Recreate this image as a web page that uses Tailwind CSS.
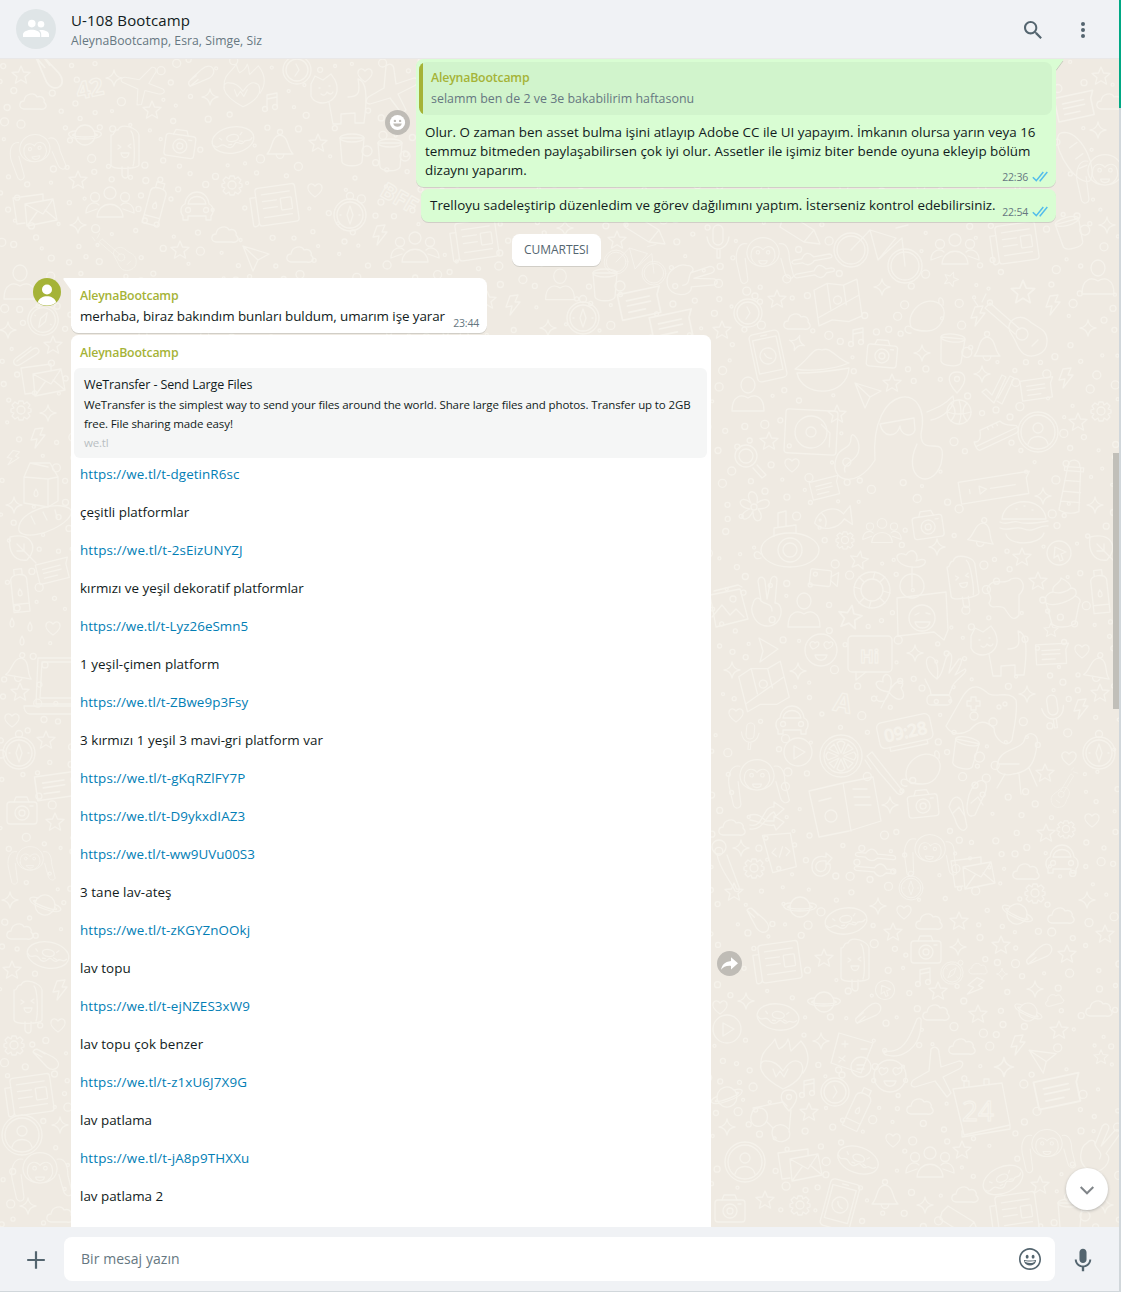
<!DOCTYPE html>
<html lang="tr">
<head>
<meta charset="utf-8">
<title>U-108 Bootcamp</title>
<script src="https://cdn.jsdelivr.net/npm/@tailwindcss/browser@4"></script>
</head>
<body class="h-[1292px] w-[1121px] overflow-hidden bg-[#d1d7db] font-['Open_Sans','Noto_Sans',sans-serif] text-[#111b21]">
<div class="flex h-[1292px] w-[1121px]">
<main class="flex h-[1291px] w-[1119px] flex-col bg-[#f0f2f5]">

  <header class="flex h-[59px] shrink-0 items-center border-b border-[#e9e8e8] pl-4 pr-6">
    <svg class="h-10 w-10" viewBox="0 0 40 40"><circle cx="20" cy="20" r="20" fill="#dfe5e7"/><g fill="#fff"><circle cx="15.8" cy="14.6" r="3.8"/><circle cx="25" cy="15.2" r="3.3"/><path d="M7 28v-2.600c0-3.100 5-4.700 8.800-4.700s8.300 1.600 8.300 4.700V28z"/><path d="M25.200 28v-2.700c0-1.800-.8-3.100-2.100-4.100 4.400-.7 9.900 1 9.900 4.300V28z"/></g></svg>
    <div class="ml-[15px] flex-1 pt-[2px]">
      <h1 class="text-[15px] leading-[21px] tracking-[0.15px]">U-108 Bootcamp</h1>
      <p class="text-[12.2px] leading-[20px] tracking-[0.05px] text-[#667781]">AleynaBootcamp, Esra, Simge, Siz</p>
    </div>
    <svg class="mr-[26px] mt-0.5 h-6 w-6" viewBox="0 0 24 24" fill="#54656f"><path d="M15.9,14.3H15L14.7,14c1-1.1,1.6-2.7,1.6-4.3c0-3.7-3-6.7-6.7-6.7S3,6,3,9.700s3,6.700,6.700,6.700c1.600,0,3.200-0.600,4.300-1.600l0.300,0.300v0.800l5.100,5.100l1.500-1.500L15.900,14.300z M9.700,14.300c-2.600,0-4.600-2.100-4.600-4.600s2.100-4.600,4.600-4.600s4.600,2.100,4.600,4.600S12.300,14.300,9.700,14.300z"/></svg>
    <svg class="mt-0.5 h-6 w-6" viewBox="0 0 24 24" fill="#54656f"><circle cx="12" cy="6" r="2"/><circle cx="12" cy="12" r="2"/><circle cx="12" cy="18" r="2"/></svg>
  </header>

  <section class="relative h-[1168px] shrink-0 overflow-hidden bg-[#efeae2]">
    <svg id="wallpaper" class="absolute inset-0 h-full w-full" viewBox="0 59 1119 1168" fill="none" stroke="#f5f2eb" stroke-width="1.3" stroke-linecap="round" stroke-linejoin="round"></svg>

    <div class="relative flex flex-col">
      <!-- outgoing reply -->
      <div class="flex h-[128px] items-start justify-end pr-[63px]">
        <svg class="mr-1.5 mt-[51px] h-[25px] w-[25px]" viewBox="0 0 25 25"><circle cx="12.500" cy="12.500" r="12.500" fill="#bfbcb6"/><circle cx="12.500" cy="12.500" r="7.600" fill="#fff"/><g fill="#bfbcb6"><circle cx="9.900" cy="10.900" r="1.200"/><circle cx="15.100" cy="10.900" r="1.200"/><path d="M8.200 13.600h8.600a4.500 4.500 0 0 1-8.600 0z"/></g></svg>
        <div class="relative h-[128px] w-[640px] rounded-b-[7.500px] rounded-tl-[7.500px] bg-[#d9fdd3] px-[3px] pt-[3px] shadow-[0_1px_0.500px_rgba(11,20,26,0.13)]">
          <svg class="absolute -right-2 top-0 h-[13px] w-2" viewBox="0 0 8 13"><path d="M0 0h8L0 11z" fill="#d9fdd3"/><path d="M7 2 0 11.500" stroke="#c5cfbd" stroke-width="1"/></svg>
          <div class="flex h-[53px] w-[633px] overflow-hidden rounded-[7.500px] bg-[#d1f4cc]">
            <div class="w-1 bg-[#a5b337]"></div>
            <div class="pl-2 pt-[5px]">
              <p class="text-[12.3px] font-semibold leading-[22px] tracking-[-0.17px] text-[#a5b337]">AleynaBootcamp</p>
              <p class="text-[12.400px] leading-5 tracking-[0.02px] text-[#667781]">selamm ben de 2 ve 3e bakabilirim haftasonu</p>
            </div>
          </div>
          <p class="whitespace-nowrap pl-[6px] pt-[8px] text-[13.400px] leading-[19px] tracking-[0.01px]">Olur. O zaman ben asset bulma işini atlayıp Adobe CC ile UI yapayım. İmkanın olursa yarın veya 16<br>temmuz bitmeden paylaşabilirsen çok iyi olur. Assetler ile işimiz biter bende oyuna ekleyip bölüm<br>dizaynı yaparım.</p>
          <div class="absolute bottom-[3px] right-[8px] flex items-center gap-1 text-[10.500px] leading-[15px] tracking-[-0.2px] text-[#667781]"><span class="pt-0.5 leading-[13px]">22:36</span> <svg class="h-[11px] w-4" viewBox="0 0 16 11" fill="none" stroke="#53bdeb" stroke-width="1.500"><path d="M.8 6.200 4.300 9.600 11.300 1M7.500 9.300l.7.400L15.300 1"/></svg></div>
        </div>
      </div>
      <!-- outgoing text -->
      <div class="mt-0.5 flex justify-end pr-[63px]">
        <div class="flex h-[33px] w-[635px] justify-between rounded-[7.500px] bg-[#d9fdd3] pl-[9px] pr-[8px] shadow-[0_1px_0.500px_rgba(11,20,26,0.13)]">
          <p class="whitespace-nowrap pt-[7px] text-[13.400px] leading-[19px]">Trelloyu sadeleştirip düzenledim ve görev dağılımını yaptım. İsterseniz kontrol edebilirsiniz.</p>
          <div class="mt-[15px] flex h-[15px] items-center gap-1 text-[10.500px] leading-[15px] tracking-[-0.2px] text-[#667781]"><span class="pt-0.5 leading-[13px]">22:54</span> <svg class="h-[11px] w-4" viewBox="0 0 16 11" fill="none" stroke="#53bdeb" stroke-width="1.500"><path d="M.8 6.200 4.300 9.600 11.300 1M7.500 9.300l.7.400L15.300 1"/></svg></div>
        </div>
      </div>
      <!-- day divider -->
      <div class="ml-[512px] mt-3 flex h-8 w-[89px] items-center justify-center rounded-[7.500px] bg-white text-[12px] tracking-[-0.05px] text-[#54656f] shadow-[0_1px_0.500px_rgba(11,20,26,0.13)]">CUMARTESI</div>
      <!-- incoming text -->
      <div class="mt-3 flex items-start pl-[33px]">
        <svg class="mr-[10px] h-7 w-7" viewBox="0 0 28 28"><circle cx="14" cy="14" r="14" fill="#a5b337"/><circle cx="14" cy="11.500" r="5" fill="#fff"/><path d="M4.800 24.300C6.200 20 10 18.200 14 18.200s7.800 1.800 9.200 6.100A14 14 0 0 1 14 27.500a14 14 0 0 1-9.200-3.200z" fill="#fff"/></svg>
        <div class="relative flex h-[55px] w-[416px] justify-between rounded-b-[7.500px] rounded-tr-[7.500px] bg-white pl-[9px] pr-[8px] shadow-[0_1px_0.500px_rgba(11,20,26,0.13)]">
          <svg class="absolute -left-2 top-0 h-[13px] w-2" viewBox="0 0 8 13"><path d="M8 0H1.500C0 0 0 1.200.800 2L8 12z" fill="#fff"/></svg>
          <div class="pt-[7px]">
            <p class="text-[12.300px] font-semibold leading-[22px] tracking-[-0.17px] text-[#a5b337]">AleynaBootcamp</p>
            <p class="whitespace-nowrap text-[13.400px] leading-[19px] tracking-[-0.07px]">merhaba, biraz bakındım bunları buldum, umarım işe yarar</p>
          </div>
          <span class="mt-[38px] text-[10.500px] leading-[15px] tracking-[-0.2px] text-[#667781]">23:44</span>
        </div>
      </div>
      <!-- incoming links -->
      <div class="mt-0.5 flex items-start pl-[71px]">
        <div class="h-[960px] w-[640px] rounded-t-[7.500px] bg-white px-[3px] pt-[7px]">
          <p class="pl-[6px] text-[12.300px] font-semibold leading-[22px] tracking-[-0.17px] text-[#a5b337]">AleynaBootcamp</p>
          <div class="mt-[4px] h-[90px] w-[633px] rounded-[6px] bg-[#f5f6f6] pl-[10px] pt-[7px]">
            <p class="text-[12.500px] leading-[19px] tracking-[-0.12px]">WeTransfer - Send Large Files</p>
            <p class="mt-px whitespace-nowrap text-[11.500px] leading-[19px] tracking-[-0.115px]">WeTransfer is the simplest way to send your files around the world. Share large files and photos. Transfer up to 2GB<br>free. File sharing made easy!</p>
            <p class="text-[11.500px] leading-[19px] tracking-[-0.2px] text-[#b9bfc3]">we.tl</p>
          </div>
          <div class="flex flex-col gap-[19px] pl-[6px] pt-[7px] text-[13.400px] leading-[19px]">
            <a class="tracking-[0.08px] text-[#027eb5]">https://we.tl/t-dgetinR6sc</a>
            <p>çeşitli platformlar</p>
            <a class="tracking-[0.15px] text-[#027eb5]">https://we.tl/t-2sEizUNYZJ</a>
            <p>kırmızı ve yeşil dekoratif platformlar</p>
            <a class="tracking-[0.02px] text-[#027eb5]">https://we.tl/t-Lyz26eSmn5</a>
            <p class="tracking-[0.05px]">1 yeşil-çimen platform</p>
            <a class="tracking-[0.05px] text-[#027eb5]">https://we.tl/t-ZBwe9p3Fsy</a>
            <p class="tracking-[0.07px]">3 kırmızı 1 yeşil 3 mavi-gri platform var</p>
            <a class="tracking-[0.12px] text-[#027eb5]">https://we.tl/t-gKqRZlFY7P</a>
            <a class="tracking-[0.08px] text-[#027eb5]">https://we.tl/t-D9ykxdIAZ3</a>
            <a class="tracking-[0.04px] text-[#027eb5]">https://we.tl/t-ww9UVu00S3</a>
            <p class="tracking-[0.07px]">3 tane lav-ateş</p>
            <a class="tracking-[0.08px] text-[#027eb5]">https://we.tl/t-zKGYZnOOkj</a>
            <p class="tracking-[0.07px]">lav topu</p>
            <a class="tracking-[0.1px] text-[#027eb5]">https://we.tl/t-ejNZES3xW9</a>
            <p class="tracking-[0.07px]">lav topu çok benzer</p>
            <a class="tracking-[0.12px] text-[#027eb5]">https://we.tl/t-z1xU6J7X9G</a>
            <p>lav patlama</p>
            <a class="tracking-[0.15px] text-[#027eb5]">https://we.tl/t-jA8p9THXXu</a>
            <p>lav patlama 2</p>
          </div>
        </div>
        <svg class="ml-1.5 mt-[616px] h-[25px] w-[25px]" viewBox="0 0 25 25"><circle cx="12.500" cy="12.500" r="12.500" fill="#bfbcb6"/><path d="M14 6.300 21 12.300 14 18.500v-3.600C9.300 14.500 6.300 15.900 4.100 18.800 4.800 14.200 7.400 10.600 14 9.900z" fill="#fff"/></svg>
      </div>
    </div>

    <div class="absolute right-0 top-[394px] h-[256px] w-[6px] bg-[#c1bfb9]"></div>
    <div class="absolute bottom-[17px] right-[11px] flex h-[42px] w-[42px] items-center justify-center rounded-full bg-white shadow-[0_1px_3px_rgba(11,20,26,0.25)]">
      <svg class="h-[21px] w-[21px]" viewBox="0 0 21 21" fill="none" stroke="#808589" stroke-width="2"><path d="m3.700 8 6.300 6.300L16.300 8"/></svg>
    </div>
  </section>

  <footer class="flex h-16 items-center">
    <svg class="ml-6 h-6 w-6" viewBox="0 0 24 24" stroke="#54656f" stroke-width="2.200"><path d="M3.200 13h17.600M12 4.200v17.600"/></svg>
    <div class="ml-4 flex h-11 w-[991px] items-center justify-between rounded-[8px] bg-white pl-[17px] pr-[13px]">
      <span class="pb-0.5 text-[14px] tracking-[0.05px] text-[#667781]">Bir mesaj yazın</span>
      <svg class="h-6 w-6" viewBox="0 0 24 24" fill="#54656f"><path d="M9.153,11.603c0.795,0,1.439-0.879,1.439-1.962S9.948,7.679,9.153,7.679S7.714,8.558,7.714,9.641S8.358,11.603,9.153,11.603z M5.949,12.965c-0.026-0.307-0.131,5.218,6.063,5.551c6.066-0.250,6.066-5.551,6.066-5.551C12,14.381,5.949,12.965,5.949,12.965z M17.312,14.073c0,0-0.669,1.959-5.051,1.959c-3.505,0-5.388-1.164-5.607-1.959C6.654,14.073,12.566,15.128,17.312,14.073z M11.804,1.011c-6.195,0-10.826,5.022-10.826,11.217s4.826,10.761,11.021,10.761S23.020,18.423,23.020,12.228C23.021,6.033,17.999,1.011,11.804,1.011z M12,21.354c-5.273,0-9.381-3.886-9.381-9.159s3.942-9.548,9.215-9.548s9.548,4.275,9.548,9.548C21.381,17.467,17.273,21.354,12,21.354z M15.108,11.603c0.795,0,1.439-0.879,1.439-1.962s-0.644-1.962-1.439-1.962s-1.439,0.879-1.439,1.962S14.313,11.603,15.108,11.603z"/></svg>
    </div>
    <svg class="ml-4 mt-0.5 h-6 w-6" viewBox="0 0 24 24" fill="#54656f"><path d="M11.999,14.942c2.001,0,3.531-1.530,3.531-3.531V4.350c0-2.001-1.530-3.531-3.531-3.531S8.469,2.350,8.469,4.350v7.061C8.469,13.412,9.999,14.942,11.999,14.942z M18.237,11.412c0,3.531-2.942,6.002-6.237,6.002s-6.237-2.471-6.237-6.002H3.761c0,4.001,3.178,7.297,7.061,7.885v3.884h2.354v-3.884c3.884-0.588,7.061-3.884,7.061-7.885L18.237,11.412z"/></svg>
  </footer>
</main>
<div class="h-[108px] w-0.5 bg-[#00a884]"></div>
</div>

<script>
// Line-art wallpaper: each shape is drawn around its own centre.
const shapes = {
  star: '<path d="M0-9 2.500-3 9-2.600 4 1.800 5.600 8.200 0 4.800-5.600 8.200-4 1.800-9-2.600-2.500-3z"/>',
  spark: '<path d="M0-8Q1-1 8 0 1 1 0 8-1 1-8 0-1-1 0-8z"/>',
  heart: '<path d="M0 7C-13-2-5-10 0-4 5-10 13-2 0 7z"/>',
  cloud: '<path d="M-9 7C-15 6-14-1-9-1-8-9 2-10 4-5 10-7 12-2 11 0 16 5 11 8 7 7z"/>',
  bolt: '<path d="M-3-9 5-10 2-3 7-3-3 10-1 1-7 2z"/>',
  gear: '<circle r="4"/><path d="M-2-9h4l1 3 3-2 3 3-2 3 3 1v3l-3 1 2 3-3 3-3-2-1 3h-4l-1-3-3 2-3-3 2-3-3-1v-3l3-1-2-3 3-3 3 2z"/>',
  camera: '<rect x="-15" y="-10" width="30" height="22" rx="3"/><circle cy="1" r="7"/><circle cy="1" r="3"/><path d="M-8-10l2-5H5l2 5M8-6h3"/>',
  bell: '<path d="M-13 9C-7 4-9-9 0-10 9-9 7 4 13 9zM-4 9c1 6 7 6 8 0"/><circle cy="-13" r="2.500"/>',
  msg: '<path d="M-16-9H17l-3 6V11H-16z"/><path d="M-10-3H8M-10 1H8M-10 6H3"/>',
  group: '<circle cy="-12" r="6"/><path d="M-13 12C-12-5 12-5 13 12z"/><circle cx="-15" cy="-8" r="4.500"/><circle cx="15" cy="-8" r="4.500"/><path d="M-13 4l-11 4c0-10 9-12 13-8M13 4l11 4c0-10-9-12-13-8"/>',
  user: '<ellipse cy="-12" rx="7" ry="8"/><path d="M-16 14C-16-2-6-3 0 1 6-3 16-2 16 14z"/>',
  badge: '<circle r="20"/><circle r="17"/><circle cy="-4" r="5"/><path d="M-10 12C-8 2 8 2 10 12"/>',
  compass: '<circle r="13"/><circle r="16"/><path d="M0-9 3 0 0 9-3 0z"/><circle cy="-19" r="3.500"/><path d="M-10 0h1M9 0h1"/>',
  clock: '<circle r="14"/><circle r="11"/><path d="M-1-6 2 0-2 6"/><circle cx="7" cy="-17" r="3"/>',
  face: '<circle r="16"/><path d="M-8-1C-15-6-8-11-6-7-2-11 1-4-8-1zM6-1C-1-6 6-11 8-7 12-11 15-4 6-1zM-6 5H6C4 12-4 12-6 5z"/>',
  monkey: '<path d="M-19-2C-17-25 17-25 19-2 19 20-19 20-19-2zM-14 4C-15-12-3-10 0-5 3-10 15-12 14 4 10 18-10 18-14 4z"/><circle cx="-6" cy="-2" r="2"/><circle cx="6" cy="-2" r="2"/><path d="M-5 8H5C4 13-4 13-5 8z"/><path d="M-19-12c-10-2-14 10-12 22l5 22c3 5 9 2 8-3l-3-24M19-12c10-2 12 10 12 18l5 20c-3 5-9 2-10-3l-5-18"/>',
  planet: '<circle r="10"/><path d="M-9-4C-20-4-20 4 0 4S20-4 9-4M-10-1C-16 0-10 2 0 2S16 0 10-1"/>',
  donut: '<ellipse rx="21" ry="13"/><ellipse cy="-2" rx="6" ry="3.500"/><path d="M-20 2c4 6 7-2 11 2s7 4 10 0 6 4 9 0 6 2 9-3M-13-4l2 2M10-6l-2 2M-5 4h3M6 2l3 1"/>',
  news: '<rect x="-18" y="-19" width="40" height="38" rx="3"/><path d="M-18-10h-6v27c0 3 5 2 6-1M-12-12H16M-12-5H2M-12 2H2M-12 11H16"/><rect x="6" y="-6" width="11" height="12" rx="1"/>',
  mug: '<path d="M-12-12 -10 12C-8 17 8 17 10 12L12-12z"/><ellipse cy="-12" rx="12" ry="4"/><circle cx="15" cy="1" r="5"/>',
  map: '<path d="M-22-16-8-21 8-17 22-21V16L8 20-8 16-22 20zM-22 12 22-5M-8-21V5M8-17V3"/><circle cy="-3" r="4"/>',
  phone: '<rect x="-15" y="-24" width="30" height="48" rx="4"/><rect x="-12" y="-18" width="24" height="34"/><circle r="8"/><path d="M-3-3q1 5 6 6M-3-21h6"/>',
  lips: '<path d="M-27 2C-12-8-9-21 0-17 9-21 14-8 27-4 12 2-9 5-27 2zM-25 6C-8 6 10 4 27 1 25 31-20 31-25 6z"/>',
  bike: '<circle cx="-27" cy="0" r="17"/><circle cx="-27" r="14"/><circle cx="27" cy="16" r="17"/><circle cx="27" cy="16" r="14"/><path d="M-27 0-8-20 18-12 0 10-8-20M0 10l24-22 3 28M18-22l12-3"/>',
  guitar: '<path d="M-8 5C-18-7-2-18 8-10 16-2 28-2 27 12 27 24 12 29 4 24-3 19-2 14-8 5zM0-1-30-27l-5 5L-5 4"/><circle cx="2" cy="4" r="6"/><path d="M12 16l6-6M-38-28l4-8M-42-24l-4-6"/>',
  record: '<rect x="-26" y="-22" width="52" height="44" rx="3"/><circle r="16"/><circle r="5"/><circle cx="-21" cy="15" r="2"/><path d="M10-8l9 8v14"/>',
  ball: '<circle r="12"/><path d="M-12 0Q0 4 12 0M0-12Q4 0 0 12M-8-9Q0 0-8 9M8-9Q0 0 8 9"/>',
  shoe: '<path d="M-22 5c4 3 8 0 10-8l22 0c3 8 9 8 13 11 2 6-1 7-5 7h-38c-3 0-3-6-2-10zM-22 10h44M-4-3v3M1-3v3M6-3v3"/>',
  squid: '<path d="M-22 30C-28-48 36-50 24 4 24 30 52 0 44 34 34 62 4 48 20 14M-22 30C-42 62-70 50-60 26c4-10 14-6 14-18 0-8 8 0 8 10 0 14-18 14-14 24M30-18c14-6 18-8 26-16 4 12-12 22-22 24"/><path d="M-17-6 17-12 18 0C15 8 4 6 3-4 0 8-14 8-17-6z"/>',
  pin: '<path d="M0 10C-14-5-6-11 0-11S14-5 0 10z"/><circle cy="-4" r="2.500"/>',
  note: '<path d="M-3 7V-7L7-9V4M-3-3 7-5"/><circle cx="-5" cy="7" r="2.500"/><circle cx="5" cy="5" r="2.500"/>',
  plane: '<path d="M-12-12 14-4 3 2-2 13z M3 2-12-12"/>',
  checks: '<path d="M-16 2l4-3 6 6 10-20 4 2-12 26zM0 8l12-22 4 2-12 26-5-3"/>',
  jet: '<path d="M-4-24c4-4 8-1 8 4l2 14 18-6c6 0 4 6 0 8L8 4l8 16-4 4L0 8l-20 6c-6 0-4-6 0-8l14-8z"/>',
  pencil: '<path d="M-18-10-12-16 14 0 20 14 4 12-20-3zM14 0 4 12"/>',
  slider: '<path d="M-18-8h8c4-6 8-6 12 0h16c3 1 3 4 0 4H2C-2 0-6 0-10-4h-8c-3-1-3-3 0-4zM-18 6H0c4-6 8-6 12 0h6c3 1 3 4 0 4h-6c-4 5-8 5-12 0h-18c-3-1-3-3 0-4z"/>',
  lens: '<circle cx="-2" cy="-4" r="11"/><circle cx="-2" cy="-4" r="7"/><path d="M5 8 14 18 18 15 9 5"/>',
  flower: '<circle r="3"/><path d="M-3-4C-12-18 6-20 3-4 16-14 22 2 4 2 14 14-2 20-1 4-8 20-20 8-4 2-20 0-14-14-3-4z"/>',
  fish: '<path d="M-18 2C-12-12 6-12 12-2L20-9 19 10 12 3C4 12-12 12-18 2zM-9-6q5 6 1 13"/><circle cx="-12" cy="0" r="1"/>',
  sub: '<ellipse rx="29" ry="17"/><circle r="12"/><circle r="7"/><path d="M-16-14v-8l22-3v8M-12-23v-14l8-2v15M-29 4c-8-8-10 8 0 4"/>',
  burger: '<path d="M-22-3C-20-26 20-26 22-3zM-24 0c8 4 12-2 18 0s14 2 30-1M-24 6c10 4 14-3 24 1s14-4 24-3M-18 12c2 12 34 12 38-1"/><path d="M-8-13h1M0-16h1M8-12h1"/>',
  tower: '<path d="M-6-20-11 24c6 3 14 3 20 0L7-20zM-9-20H10V-16H-9zM-6-21C-5-29 6-29 6-21M-8-6H8M-9 5H9M-10 15H9"/>',
  voice: '<path d="M-34-8H38l-4 6V14H-34z"/><path d="M-24 1v4M-14-1 -7 3-14 7zM-3 3H22"/>',
  cursor: '<circle r="12"/><path d="M-4-6 7-1 2 1 4 7 1 8-1 2-5 5z"/>',
  leaf: '<path d="M-12-11C10-16 17 0 5 12-9 14-14 2-12-11zM-5-4 14 15M2 3V-4M2 3h-7"/>',
  video: '<rect x="-14" y="-8" width="21" height="16" rx="2"/><path d="M7-2 14-7V7L7 2"/><circle cx="-9" cy="-3" r="2"/>',
  ring: '<circle r="18"/><circle r="11"/><path d="M-18-3-11-1M18 3 11 1M3-18 1-11M-3 18-1 11M-13-13l5 5M13 13l-5-5M13-13l-5 5M-13 13l5-5"/>',
  plant: '<circle cy="13" r="12"/><path d="M0 14V-6C-20-8-18-24-6-18 0-28 8-18 4-12 18-18 16-4 0-6"/>',
  ice: '<path d="M-14-15c4 1 2-6 7-5 3-8 20-2 21 5v30c-1 4-27 5-28 0zM-3 17v8c1 4 6 4 6 0v-8M6-19c4 4 4 30 2 35M-7-5l3 2-3 2M6-6 3-4l3 2M-4 3H4C3 9-3 9-4 3z"/>',
  cow: '<path d="M-18-6C-12-20-2-8 6-16c12-4 16 8 8 16v20c-6 8-10 0-14-6s-14 2-16-6c4-6 0-8-2-14z"/>',
  cupcake: '<path d="M-17 3C-20-5-12-8-10-8-12-16-2-16-2-22 6-18 8-14 8-12c6 0 6 6 4 8 6 2 6 6 4 8L12 24C4 28-6 28-11 24zM-17 3C-8 8 8 0 12-4M-10-8C-4-6 4-8 8-12"/>',
  bottle: '<path d="M-8-13C-7-19 7-19 8-13V20H-8zM-4-17v-6h8v6M-8 12H8"/><path d="M0-3C-7 6 7 6 0-3z"/>',
  peace: '<path d="M-7-2-10-22c1-5 6-5 7 0l2 18 4-20c2-4 6-3 6 1L7 0c10 0 8 24-8 23C-15 22-18 6-15 1c1-6 6-8 8-3zM-7-2C-2 2 4 0 4 8"/>',
  smile: '<path d="M-25-20 24-26 26 12 22 22 12 14-24 18z"/><circle r="13"/><path d="M-7-3l4-2M4-5l4 1M-7 4H8C6 12-5 12-7 4z"/>',
  photo: '<path d="M-18-12 12-18 20 12-12 20zM-14-16l24-6 4 2M-16 10-6-2 2 8 8 2 16 10"/><circle cx="5" cy="-8" r="3"/>',
  cat: '<path d="M-24-14-20-22-12-18-4-24 0-18C10 4-18 12-24-2zM-6 4l4 22h8V16l14-1v10h9c4-30 2-42-6-44 2 12 2 18-10 18"/><path d="M-16-10h1M-6-12h1M-14-4q4 3 6-2 4 4 6 0"/>',
  hi: '<rect x="-22" y="-22" width="44" height="36" rx="4"/><path d="M-14 14v8l10-8"/><text x="-10" y="5" font-size="18" font-weight="700">Hi</text>',
  play: '<circle r="14"/><path d="M-4-6 7 0-4 7z"/>',
  tri: '<path d="M-8-12 11-1-7 12-4 1z"/>',
  clover: '<path d="M0 0C-16-2-16-14-6-10-8-22 8-20 0 0 8-16 18-12 12-4 20 8 8 12 0 0-2 14-16 10-12 4M0 0-8 16"/>',
  hand: '<path d="M-8 4C-22-6-20-20-14-18-8-16-6-6-8 4zM-8 4C0-2-2-16 4-22c6 0 0 18 0 20l10-14c6-2 0 10-4 16l10-6c4 2-8 10-12 16l-4 10H-14c0-8-4-10-6-16"/><rect x="-18" y="20" width="24" height="10" rx="4"/>',
  pad: '<path d="M-20-16C-8-34 2-20 6-18c8 4 20-4 27 6 2 12-2 28-4 40-6 10-18-2-18-12-8-8-16-8-24 2-10 6-20 4-24-4z"/><path d="M-12-15h5v4h4v5h-4v4h-5v-4h-4v-5h4z"/><circle cx="10" cy="10" r="4"/><circle cx="-9" cy="4" r="4"/><circle cx="16" cy="-5" r="2"/><circle cx="22" cy="-8" r="2"/>',
  mic: '<rect x="-5" y="-15" width="10" height="20" rx="5"/><path d="M-11-3C-9 13 9 13 11-3M-1 10v8h3v-8"/>',
  car: '<path d="M-12-1C-10-17 10-17 12-1c5 2 5 9 2 12v4h-5v-4H-9v4h-5v-4c-3-3-3-10 2-12zM-9-1H9C8-11-8-11-9-1z"/><circle cx="-9" cy="5" r="2.500"/><circle cx="9" cy="5" r="2.500"/>',
  orange: '<circle r="21"/><circle r="17"/><path d="M0-3-4-13Q0-17 4-13zM3 0 13-4Q17 0 13 4zM0 3-4 13Q0 17 4 13zM-3 0-13-4Q-17 0-13 4zM2-2 7-12 12-7zM2 2 12 7 7 12zM-2 2-7 12-12 7zM-2-2-12-7-7-12z"/>',
  alarm: '<rect x="-27" y="-14" width="54" height="26" rx="5"/><path d="M-18 12v4H20v-4"/><text x="-21" y="6" font-size="17">09:28</text>',
  roll: '<path d="M-16 12C-22-4 0-22 14-10c8 8 0 26-14 26-6 0-12 0-16-4zM-16 12c-8-4-8 8 0 6M12-12c-2-8 6-6 4 2"/>',
  grill: '<path d="M-20 8C-20-14 6-8 8-22c4-8 14-4 12 6C18 4 12 12-4 14-10 16-20 14-20 8zM-12 14-20 28M2 14 4 34M12 8 20 26M-18 4H2"/>',
  brush: '<circle cx="-8" cy="-20" r="7"/><path d="M-10-13C-8 2 4 14 8 24c4 2 5-1 4-4L0-12"/>',
  tooth: '<path d="M-18-22l5-4 14 18 16 20c2 4-2 6-5 3L-6-6zM-20-18l6 9"/>',
  book: '<path d="M-34-16 0-24 30-30 38 14 6 24-24 30zM0-24 8 24M10-18h14M11-10h16M12-2h16M-24-6l12-3"/><circle cx="-12" cy="9" r="6"/>',
  flip: '<path d="M-18 4c4-16 14-10 14 0l4 20c-4 8-10 0-12-8zM2-8c8-22 22-16 16-2L8 12C0 16-2 8 2-8zM-14 10l6-6 5 8M4 0l7-6 5 8"/>',
  arrows: '<path d="M-18 8c14 4 12-20 24-18v-5l10 7-8 7-2-4C-2-3-4 14-18 12M-18-2c8-2 12 2 16 6h8V-1l10 6-8 8-2-5c-8 2-14-4-24-5"/>',
  code: '<path d="M-16-18H12l3 34-24 4zM-4-4-8 0-4 4M6-4l4 4-4 4M3-5-1 5"/>',
  turn: '<path d="M4-9C-14-14-14 12 0 10 8 8 9 2 8-2H4C6 8-8 8-6-1-4-6 0-5 4-5v4L10-8 4-13z"/>',
  mail: '<path d="M-22-12 8-16V-10M-22-12-18 14-10 13M-10-6 18-11 22 10-8 16zM-10-6 8 4 18-11M-8 16 2 2M22 10 10 0"/>',
  carrot: '<path d="M-12-6c2-5 6-2 10 0L8-1C20 6 10 16 2 9zM-12-6l9 5M-8-9l8 5"/>',
  banana: '<path d="M-19 14C2 18 8-4 14-18c3-3 5 0 4 4C18 12-2 22-16 18-19 18-20 15-19 14z"/>',
  flame: '<path d="M0 22C-30 6-24-8-16-6-10-6-4-2 0 4 4-2 10-10 18-4 24 6 14 16 0 22zM-22 0C-24-16-12-20-8-28-6-22-6-20-4-18 0-20 4-24 5-28 8-22 6-20 8-16l10-10C28-14 26-2 20 6"/><path d="M-10 2l3 8 4-6 4 6 4-8"/>',
  calc: '<path d="M-14-20 20-10 8 20-22 10z"/><circle cx="8" cy="14" r="10"/><path d="M-8-12v6M-11-9h6M8-4h6M-14 4l6 4M-8 3l-6 6M4 12h7M4 16h7"/>',
  cal: '<path d="M-27-18 22-24 30 18-16 28zM-16-20v-6h5v6M4-22v-6h5v6M-18 24v6l48-8v-4"/><text x="-18" y="14" font-size="28">24</text>',
  specs: '<path d="M-20-10c10-6 16 2 14 10-4 10-18 8-16-4zM0 8c8-8 20 0 16 10-8 8-20 2-16-10zM-6 2 0 8M-20-12l30-6 4 4M16 12l2-22"/>',
  drop: '<path d="M0-6C-7 6 7 6 0-6z"/>',
  laptop: '<path d="M-18-26H22V20H-20zM-14-22H20V14H-16zM-32 22H22v8H-26c-4 0-6-4-6-8z"/>',
  milk: '<path d="M-16-6-10-20H10L18-6V18L8 24-16 20zM-16-6 8-4 18-6M8-4V24M-10-20 8-16"/><path d="M-4 6C-11 16 3 16-4 6z"/>',
  bread: '<path d="M-24 6C-20-12 20-20 28-10 32 2-6 20-20 14-26 12-24 8-24 6zM-12-4l4 8M0-8l4 8M12-10l2 8"/>',
  clip: '<path d="M-10 6 6-6c5-3 8 2 4 5L-6 9c-6 4-10-2-5-6L4-8"/>',
  n42: '<text x="-14" y="9" font-size="24" font-weight="700">42</text>',
  bff: '<text x="-20" y="8" font-size="22" font-weight="700">BFF</text>',
  aa: '<text x="-9" y="9" font-size="26" font-weight="700">A</text>'
};
// name, x, y, rotation, scale
const items = `star 21 75;carrot 48 70 20 1.300;n42 90 88 -12;spark 114 78;jet 142 84 40 .8;carrot 200 77 -70;flame 243 88 0 .85;clock 297 70;spark 210 97;star 152 110;cloud 33 102;note 270 102;cat 335 98;heart 365 75;
monkey 35 150 -8 .8;planet 85 135;ice 125 150;camera 180 145 8;donut 233 140 -10;bell 280 145;star 318 143;mug 352 150;mail 35 210;star 78 180;group 110 205;bottle 155 205 15;car 197 205;gear 232 185;news 275 205 -8;heart 315 190;compass 350 215;spark 78 225;cloud 225 235;bolt 380 235;guitar 120 255 0 .6;star 180 250;cloud 300 255;plane 255 258;
jet 390 90 0 1;mug 390 155;bff 400 198 30;group 415 250;news 475 240 -8;spark 565 228;pencil 645 230;star 617 240;mic 718 240;bike 635 262 0 .7;user 560 287 0 .9;mug 605 285;compass 583 318;bolt 513 305;msg 640 302 -12 1.300;peace 690 280 80;star 722 330;msg 672 325 -12 1.300;spark 548 328;star 487 300;
monkey 763 254 0 .85;pencil 800 230;bike 878 250;slider 813 265 -10;group 955 252;news 1015 243 -8;mug 1070 233 -15;map 838 303 -8;cloud 797 322;clock 748 313;star 777 299;phone 768 356 -12;lips 822 367;camera 882 355 5;roll 927 315;mug 952 350 5;bell 987 347;guitar 1020 330;star 1023 292 0 1.300;bolt 1053 305;spark 882 287;star 951 279 20 .8;spark 797 343 20;spark 922 353;spark 982 374;star 892 383;spark 1088 328;spark 1107 225;bolt 978 316;note 856 337;user 748 397;plane 867 395;squid 897 430;ball 959 412;shoe 992 428 -25;badge 1038 432;checks 998 390;msg 1037 388 -8;bolt 1066 378;gear 1101 411;star 1078 422;pin 957 383;record 811 432 3;star 837 414;lens 748 460;star 769 441;user 1098 280;
star 1101 76;msg 1075 105 -12 1.200;cloud 1110 102;spark 1098 130;bread 1075 155 80;monkey 1105 172 0 .9;
flower 754 507;heart 792 465;msg 825 487 -14 .9;fish 832 518 -10;sub 790 550;gear 845 540 0 .9;group 882 533 0 .8;camera 928 526 -8;bell 982 533 10;burger 1024 522;tower 1072 487 5;voice 993 485 -9;spark 1043 496;spark 1095 505;cursor 1059 553;leaf 1102 548;star 1022 557;star 859 560 10;spark 937 547;video 824 578 6;ring 872 590;plant 912 573;ice 963 580 -8;cow 1005 595;star 1038 581;cupcake 1063 600;bottle 1100 593 -6;peace 768 603;user 804 613;star 850 617 10 1.300;smile 922 618;photo 728 607;cat 995 650;msg 1052 653 -3;heart 1082 651;bell 1098 668 10;star 1051 630 0 .8;face 821 650;hi 870 658;tri 767 650;spark 732 670;spark 798 671;spark 915 653;map 764 687 -14;aa 843 703 12;clover 889 692;hand 945 675;pad 983 712;mic 1053 710 -8;bolt 1081 709;star 1100 693;spark 1027 694;car 792 719;heart 736 715;mic 750 735 5 .8;play 798 752;orange 841 756;alarm 905 732 -12;roll 923 768;mug 965 753 12;grill 1017 760;compass 1099 753;heart 1069 758;monkey 757 777 0 .9;tooth 885 778;book 843 807;camera 923 805 -6;flip 967 803;guitar 1063 793 80 .5;star 1045 773;arrows 768 817;cloud 732 828;spark 890 805;gear 1066 829 0 .9;heart 1092 820;star 1046 833;
brush 727 867;spark 741 848;code 780 852 -5;gear 754 868;turn 822 866;slider 875 862 5;monkey 930 850 5 .8;mail 973 873;cloud 1026 872;car 1062 858;compass 911 888 0 .75;star 734 892;planet 800 907;planet 1017 914 25;gear 1035 893;spark 1087 900;carrot 757 919 15;donut 846 921 -8;spark 878 906;heart 904 912;cloud 929 922;star 959 921;cloud 1061 916;star 1105 934;star 893 932;news 778 962 -8;star 824 958;ice 855 963;camera 926 951;spark 958 947;star 1001 945;carrot 1038 955 -70;star 1067 954;compass 952 973 40 .7;cloud 978 969 0 .7;note 923 977;cursor 885 990 0 .8;star 938 991;bolt 975 987 30;spark 1035 989;spark 1002 974 0 .7;planet 824 1002;spark 746 1001;heart 720 1007;donut 778 1017 8;carrot 867 1014 -70;cloud 936 1013;star 978 1014;planet 1028 1012 25 .9;cloud 1054 1000 -15 .7;cloud 1099 1009;banana 903 1037;star 1059 1030;play 727 1029;spark 821 1041;flame 783 1067;calc 853 1053;face 890 1076;clock 835 1092;jet 935 1073;cloud 962 1047;bolt 1018 1045;plane 1043 1060 -10;spark 1004 1067 0 1.200;star 1101 1057 0 .8;cal 980 1107;msg 1058 1090 -12 1.400;planet 727 1097 -20;note 807 1088;star 809 1112;bottle 858 1110 25;spark 727 1127;specs 773 1120;cloud 920 1107;monkey 1047 1145 0 .8;pin 789 1101;
badge 745 1162;mail 800 1165;donut 858 1160 20;heart 893 1140;group 930 1165;star 962 1150;bell 885 1195;donut 1003 1180 -25;star 1040 1185;news 1015 1213 -8;mug 1070 1215;cloud 965 1195;phone 840 1205 15;gear 800 1205;star 765 1200;camera 730 1210;spark 925 1205;spark 1105 1205;peace 1100 1150 30;pencil 960 1222;
user 20 285;compass 43 320 30 .95;spark 8 330;clip 27 355;star 53 345;mail 43 380;gear 21 410;spark 48 413;bolt 38 438;bolt 13 458 20 .8;milk 40 483;spark 14 505;bread 43 520;leaf 22 548;msg 53 570 -14;bottle 20 592 -6;drop 12 624;drop 30 628;drop 22 642;heart 53 628;bell 20 668 10;star 20 692;laptop 56 684;compass 19 753;star 46 740;msg 55 785 -8 1.200;heart 12 720;camera 22 812;star 55 822;monkey 30 860 0 .7;spark 10 900;planet 45 905 20;cloud 20 932;donut 48 955 10;star 12 970;ice 28 1005;bolt 60 990;heart 58 1025;gear 14 1045;carrot 45 1058;news 30 1095 -8;spark 60 1125;badge 22 1135;monkey 40 1170 0 .9;spark 28 1206;cloud 60 1215`
  .split(';').map(s => s.trim().split(' '));
let seed = 7;
const rnd = () => (seed = (seed * 16807) % 2147483647) / 2147483647;
let out = '';
for (const [n, x, y, r = 0, s = 1] of items)
  out += `<g transform="translate(${x} ${y}) rotate(${r}) scale(${s})">${shapes[n]}</g>`;
// small bubbles fill the gaps between the drawings
const big = { squid: 45, bike: 40, guitar: 30, sub: 30, voice: 34, pad: 32, book: 34, monkey: 27, lips: 27, record: 27, cal: 30, news: 25, group: 23, burger: 25, flame: 27, cat: 27, hi: 24, smile: 26, map: 25, phone: 23, alarm: 25, orange: 22, donut: 20, badge: 21, ring: 20, ice: 21, user: 20, camera: 18, jet: 23 };
const dots = [];
for (let i = 0; i < 9000; i++) {
  const x = rnd() * 1119, y = 59 + rnd() * 1168, r = [1.500, 2, 2.500, 3, 4][Math.floor(rnd() * 5)];
  if (items.some(([n, a, b, , s = 1]) => Math.hypot(a - x, b - y) < (big[n] || 13) * s + r)) continue;
  if (dots.some(([a, b]) => Math.hypot(a - x, b - y) < 12)) continue;
  dots.push([x, y]);
  out += `<circle cx="${x.toFixed(1)}" cy="${y.toFixed(1)}" r="${r}"/>`;
}
document.getElementById('wallpaper').innerHTML = out;
</script>
</body>
</html>
